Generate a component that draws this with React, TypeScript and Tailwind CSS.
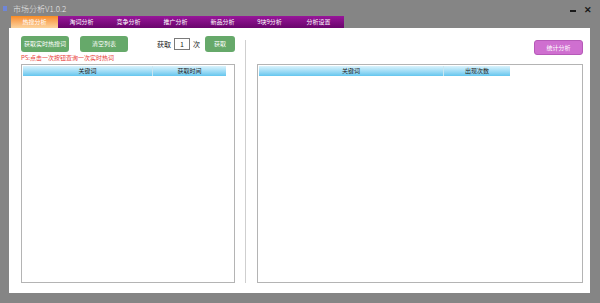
import React from "react";

const font = { fontFamily: '"Noto Sans CJK SC", "Noto Sans", sans-serif' };

const tabs = ["热搜分析", "淘词分析", "竞争分析", "推广分析", "新品分析", "9块9分析", "分析设置"];

export default function App() {
  return (
    <div className="w-[600px] h-[303px] bg-[#858585] flex flex-col overflow-hidden" style={font}>
      {/* title bar */}
      <div className="h-[16px] flex items-center relative">
        <div className="w-[4px] h-[5px] bg-[#6f86d8] ml-[3px] mt-[1px]" />
        <span className="ml-[6px] text-[8px] leading-none font-light text-[#e8e8e8] mt-[1px]">市场分析V1.0.2</span>
        <div className="absolute right-[8px] top-[5px] flex items-center gap-[8px]">
          <div className="w-[6px] h-[2px] bg-[#1a1a1a] mt-[2px]" />
          <span className="text-[9px] leading-none font-bold text-[#1a1a1a]">✕</span>
        </div>
      </div>
      {/* tabs */}
      <div className="h-[12px] flex pl-[11px]">
        {tabs.map((t, i) => (
          <div
            key={t}
            className={
              i === 0
                ? "w-[47px] h-full flex items-center justify-center text-[6px] leading-none text-white bg-gradient-to-b from-[#f78a1d] to-[#fbd39c]"
                : i === 6
                ? "w-[51px] h-full flex items-center justify-center text-[6px] leading-none text-white bg-gradient-to-b from-[#98169a] to-[#6a056c]"
                : "w-[47px] h-full flex items-center justify-center text-[6px] leading-none text-white bg-gradient-to-b from-[#98169a] to-[#6a056c]"
            }
          >
            {t}
          </div>
        ))}
      </div>
      {/* content */}
      <div className="ml-[9px] w-[581px] h-[265px] bg-white flex">
        {/* left panel */}
        <div className="w-[237px] flex flex-col pl-[12px] pt-[8px]">
          <div className="flex items-center h-[16px]">
            <button className="w-[48px] h-[16px] rounded-[3px] bg-[#66a96a] text-white text-[6px] leading-none flex items-center justify-center">获取实时热搜词</button>
            <button className="ml-[11px] w-[48px] h-[16px] rounded-[3px] bg-[#66a96a] text-white text-[6px] leading-none flex items-center justify-center">清空列表</button>
            <span className="ml-[29px] text-[7px] leading-none text-[#222]">获取</span>
            <div className="ml-[3px] w-[16px] h-[12px] border border-[#7a7a7a] flex items-center justify-center text-[7px] leading-none text-[#222]">1</div>
            <span className="ml-[3px] text-[7px] leading-none text-[#222]">次</span>
            <button className="ml-[5px] w-[30px] h-[16px] rounded-[3px] bg-[#66a96a] text-white text-[6px] leading-none flex items-center justify-center">获取</button>
          </div>
          <div className="mt-[2px] text-[6px] leading-[8px] text-[#e8403a]">PS:点击一次按钮查询一次实时热词</div>
          <div className="mt-[2px] w-[214px] h-[219px] border border-[#b4b4b4] p-[1px] flex flex-col">
            <div className="w-[203px] h-[10px] flex bg-gradient-to-b from-[#d9f3fc] to-[#63c6ee] text-[6px] leading-none text-[#222]">
              <div className="w-[130px] h-full flex items-center justify-center border-r border-[#c8e6f2]">关键词</div>
              <div className="flex-1 h-full flex items-center justify-center">获取时间</div>
            </div>
          </div>
        </div>
        {/* divider */}
        <div className="w-[1px] bg-[#cfcfcf] mt-[12px] mb-[10px]" />
        {/* right panel */}
        <div className="flex-1 flex flex-col pl-[11px] pr-[7px] pt-[12px]">
          <div className="flex justify-end h-[15px]">
            <button className="w-[49px] h-[15px] rounded-[3px] bg-[#cf6fd0] border border-[#b65ab8] text-white text-[6px] leading-none flex items-center justify-center">统计分析</button>
          </div>
          <div className="mt-[9px] w-[326px] h-[219px] border border-[#b4b4b4] p-[1px] flex flex-col">
            <div className="w-[251px] h-[10px] flex bg-gradient-to-b from-[#d9f3fc] to-[#63c6ee] text-[6px] leading-none text-[#222]">
              <div className="w-[185px] h-full flex items-center justify-center border-r border-[#c8e6f2]">关键词</div>
              <div className="flex-1 h-full flex items-center justify-center">出现次数</div>
            </div>
          </div>
        </div>
      </div>
    </div>
  );
}
